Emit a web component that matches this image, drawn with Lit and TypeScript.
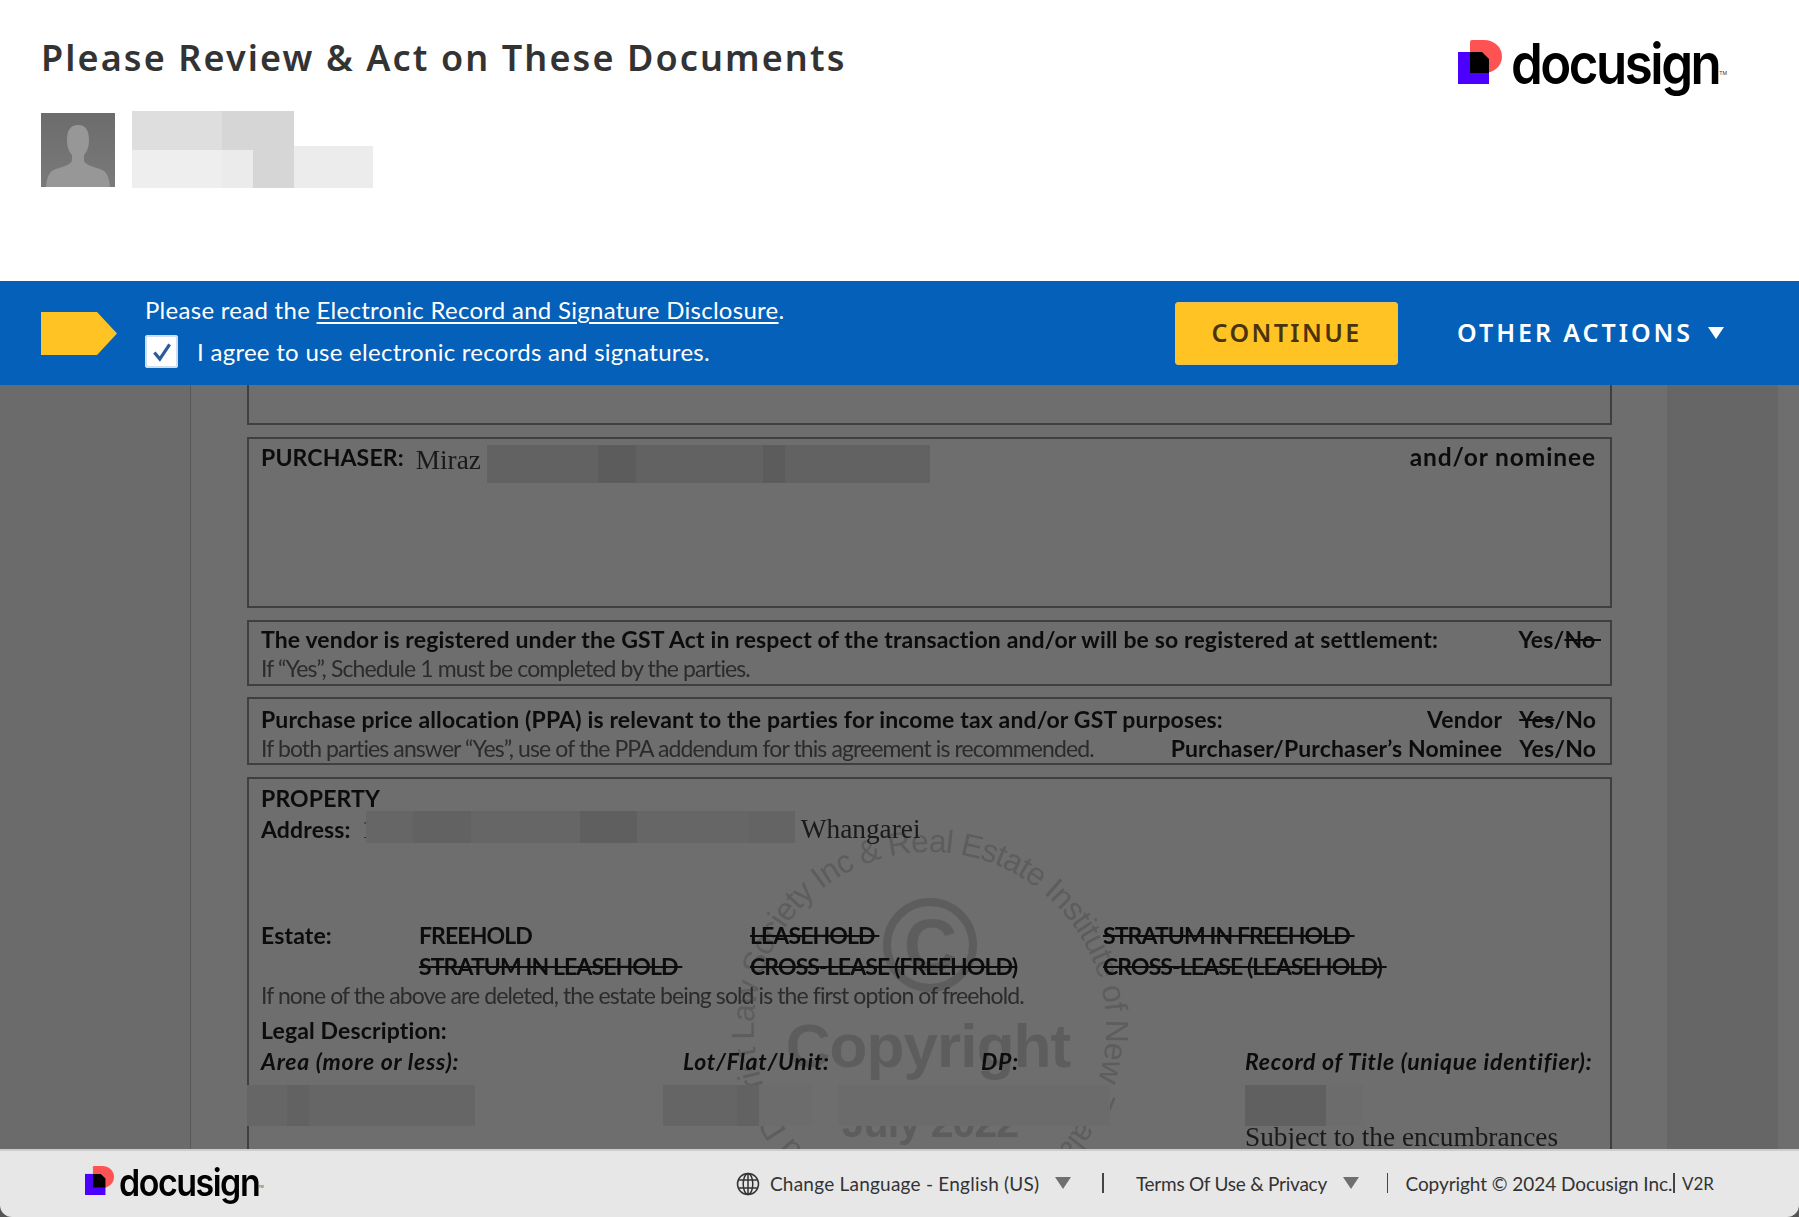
import { LitElement, html, css, svg } from "lit";
import { customElement } from "lit/decorators.js";

const mark = svg`<rect x="0" y="12" width="31" height="32" fill="#4c00ff"/>
<path d="M12 2Q12 0 14 0H26C36 0 44 7 44 16.5C44 26 36 33 26 33H12Z" fill="#ff5252"/>
<path d="M12 12H24L31 19V33H12Z" fill="#000"/>`;

type Block = [number, number, number, number, string];
const redactions: Block[] = [
  [487, 445, 443, 38, "#626262"],
  [598, 445, 38, 38, "#5c5c5c"],
  [763, 445, 22, 38, "#5c5c5c"],
  [366, 811, 429, 32, "#666666"],
  [413, 811, 58, 32, "#626262"],
  [580, 811, 57, 32, "#5f5f5f"],
  [749, 811, 46, 32, "#646464"],
  [247, 1085, 228, 41, "#666666"],
  [287, 1085, 22, 41, "#626262"],
  [663, 1085, 96, 41, "#656565"],
  [737, 1085, 22, 41, "#626262"],
  [759, 1085, 53, 41, "#6c6c6c"],
  [838, 1085, 272, 41, "#6b6b6b"],
  [1245, 1085, 81, 41, "#606060"],
  [1326, 1085, 37, 41, "#6c6c6c"],
];
const nameBlocks: Block[] = [
  [0, 0, 162, 39, "#dedede"],
  [90, 0, 72, 77, "#d6d6d6"],
  [0, 39, 121, 38, "#eeeeee"],
  [90, 39, 31, 38, "#ebebeb"],
  [162, 35, 79, 42, "#ececec"],
];

@customElement("app-root")
export class AppRoot extends LitElement {
  static styles = css`
    :host { display: flex; flex-direction: column; height: 100vh; min-height: 1217px; overflow: hidden; background: #555; font-family: "Lato", "Noto Sans", sans-serif; }
    .header { height: 281px; flex: none; background: #fff; display: flex; justify-content: space-between; padding: 0 72px 0 41px; box-sizing: border-box; }
    h1 { margin: 37px 0 0; font: 600 36px/42px "Noto Sans", sans-serif; letter-spacing: 2.1px; color: #333; white-space: nowrap; }
    .who { display: flex; gap: 17px; margin-top: 32px; align-items: flex-start; }
    .avatar { width: 74px; height: 74px; margin-top: 2px; display: block; }
    .name { position: relative; width: 241px; height: 77px; }
    .block { position: absolute; }
    .logo { display: flex; align-items: flex-start; align-self: flex-start; margin-top: 40px; }
    .logo svg { width: 44px; height: 44px; flex: none; }
    .logo-word { font: 600 51px/44px "Inter", sans-serif; letter-spacing: -2.5px; color: #000; margin-left: 9px; transform: scaleY(1.1); transform-origin: 0 0; }
    .tm { font: 400 5px/5px "Inter", sans-serif; color: #333; align-self: flex-end; margin-bottom: 8px; margin-left: 0; }
    .banner { height: 104px; flex: none; background: #0460b8; display: flex; align-items: center; color: #fff; padding-left: 41px; box-sizing: border-box; }
    .arrow { width: 76px; height: 43px; flex: none; margin-right: 28px; }
    .msg { flex: 1; font-size: 24px; letter-spacing: .28px; margin-top: -5px; }
    .msg a { color: #fff; text-decoration: underline; text-underline-offset: 3px; }
    .msg-line { height: 33px; line-height: 33px; }
    .agree { display: flex; align-items: center; gap: 19px; margin-top: 9px; }
    .check { width: 33px; height: 33px; background: #fff; border-radius: 3px; box-shadow: inset 0 0 0 2px #cfdff0; display: flex; align-items: center; justify-content: center; }
    .check svg { width: 24px; height: 24px; }
    .btn { width: 223px; height: 63px; box-sizing: border-box; padding-bottom: 2px; background: #ffc423; border: 1px solid #e8c25a; border-radius: 3px; display: flex; align-items: center; justify-content: center; font: 600 25px "Noto Sans", sans-serif; letter-spacing: 2.4px; color: #4a3410; }
    .other { margin-left: 59px; margin-right: 75px; display: flex; align-items: center; gap: 15px; padding-bottom: 2px; font: 600 25px "Noto Sans", sans-serif; letter-spacing: 2.95px; white-space: nowrap; }
    .tri { width: 0; height: 0; margin-top: 2px; border-left: 8px solid transparent; border-right: 8px solid transparent; border-top: 12px solid #fff; }
    .doc { flex: 1; min-height: 0; display: grid; grid-template-columns: 190px 1477px 111px 1fr; background: #6e6e6e; overflow: hidden; }
    .gutter { background: #6b6b6b; }
    .right { background: #666; }
    .page { position: relative; box-sizing: border-box; border-left: 1px solid #585858; padding: 0 55px 0 56px; filter: blur(.45px); font: 400 23px/28px "Lato", sans-serif; letter-spacing: -.9px; color: #2b2b2b; white-space: nowrap; overflow: hidden; }
    .wm { position: absolute; left: 0; top: 0; width: 1477px; height: 764px; }
    .wm text { font-family: "Liberation Sans", sans-serif; fill: #5d5d5d; }
    .box { position: relative; border: 2px solid #3f3f3f; box-sizing: border-box; padding: 0 14px 0 12px; }
    .b1 { height: 40px; border-top: 0; margin-bottom: 12px; }
    .b2 { height: 171px; margin-bottom: 12px; padding-top: 4px; }
    .b3 { height: 66px; margin-bottom: 11px; padding-top: 3px; }
    .b4 { height: 68px; margin-bottom: 12px; padding-top: 6px; }
    .b5 { height: 500px; padding-top: 5px; }
    .row { height: 28px; display: flex; align-items: center; justify-content: space-between; }
    .b3 .row + .row { margin-top: 1px; }
    b { font-weight: 700; color: #0c0c0c; letter-spacing: .14px; }
    .wide { font-size: 24.5px; letter-spacing: .9px; }
    .caps { font-weight: 700; color: #0c0c0c; letter-spacing: -.9px; }
    .serif { font-family: "Liberation Serif", serif; font-size: 27.3px; letter-spacing: 0; font-weight: 400; color: #1a1a1a; }
    .left { display: flex; align-items: center; gap: 12px; }
    .left .serif { margin-top: 6px; }
    s { text-decoration-thickness: 2px; color: #0c0c0c; }
    .r-yes { margin-right: -5px; }
    .pair { display: flex; gap: 17px; }
    .gap1 { margin-top: 1px; }
    .gap3 { margin-top: 3px; }
    .gap7 { margin-top: 7px; }
    .estate { margin-top: 78px; }
    .est-grid { display: grid; grid-template-columns: 158px 331px 353px 1fr; height: 28px; align-items: center; }
    .it-grid { display: grid; grid-template-columns: 422px 298px 264px 1fr; height: 28px; align-items: center; font-style: italic; font-weight: 700; color: #0c0c0c; letter-spacing: .75px; }
    .subject { margin-top: 48px; padding-left: 984px; height: 28px; line-height: 28px; }
    .addr { justify-content: flex-start; }
    .tick { margin-left: 11px; }
    .addr .place { margin-left: 425.5px; }
    .redact { position: absolute; }
    .footer { height: 68px; flex: none; box-sizing: border-box; background: #e7e7e7; border-top: 2px solid #cdcdcd; border-radius: 0 0 12px 12px; display: flex; align-items: center; padding: 0 85px; font-size: 19px; color: #333; white-space: nowrap; }
    .f-logo { display: flex; align-items: flex-start; flex: none; margin-top: -8px; }
    .f-logo svg { width: 29px; height: 29px; flex: none; }
    .f-word { font: 600 34px/29px "Inter", sans-serif; letter-spacing: -1.5px; color: #000; margin-left: 5px; transform: scaleY(1.1); transform-origin: 0 0; }
    .f-tm { font: 400 3.5px/4px "Inter", sans-serif; color: #333; align-self: flex-end; margin-bottom: 6px; margin-left: -1px; }
    .f-items { margin-left: auto; display: flex; align-items: center; margin-top: -2px; }
    .globe { width: 24px; height: 24px; margin-right: 10px; margin-top: 2px; }
    .lang { letter-spacing: .23px; }
    .terms { letter-spacing: -.25px; }
    .copy { letter-spacing: -.06px; }
    .ftri { width: 0; height: 0; border-left: 8px solid transparent; border-right: 8px solid transparent; border-top: 12px solid #6f6f6f; margin-left: 16px; }
    .sep { width: 1.5px; height: 20px; background: #444; }
    .s1 { margin: 0 32px 0 31px; }
    .s2 { margin: 0 17px 0 28px; }
    .s3 { margin: 0 7px 0 1px; }
    .v { font-size: 17px; }
  `;

  private blocks(list: Block[], ox: number, oy: number, cls: string) {
    return list.map(([x, y, w, h, c]) => html`<div class=${cls} style="left:${x - ox}px;top:${y - oy}px;width:${w}px;height:${h}px;background:${c}"></div>`);
  }

  render() {
    return html`
      <div class="header">
        <div>
          <h1>Please Review &amp; Act on These Documents</h1>
          <div class="who">
            <svg class="avatar" viewBox="0 0 74 74">
              <defs><linearGradient id="av" x1="0" y1="0" x2="0" y2="1"><stop offset="0" stop-color="#6c6c6c"/><stop offset="1" stop-color="#7a7a7a"/></linearGradient></defs>
              <rect width="74" height="74" fill="url(#av)"/>
              <path d="M37 12C29 12 26 18 26 27C26 34 28 39 31 42V47C31 51 24 53 15 56C8 58 6 64 5 74H69C68 64 66 58 59 56C50 53 43 51 43 47V42C46 39 48 34 48 27C48 18 45 12 37 12Z" fill="#979797"/>
            </svg>
            <div class="name">${this.blocks(nameBlocks, 0, 0, "block")}</div>
          </div>
        </div>
        <div class="logo">
          <svg viewBox="0 0 44 44">${mark}</svg>
          <span class="logo-word">docusign</span><span class="tm">TM</span>
        </div>
      </div>

      <div class="banner">
        <svg class="arrow" viewBox="0 0 76 43"><path d="M0 0H56L76 21.5L56 43H0Z" fill="#ffc423"/></svg>
        <div class="msg">
          <div class="msg-line">Please read the <a href="#">Electronic Record and Signature Disclosure</a>.</div>
          <div class="agree">
            <div class="check"><svg viewBox="0 0 22 22"><path d="M4 11.5L9 17.5L18 4" fill="none" stroke="#2b5c9e" stroke-width="3"/></svg></div>
            <span>I agree to use electronic records and signatures.</span>
          </div>
        </div>
        <div class="btn">CONTINUE</div>
        <div class="other">OTHER ACTIONS <span class="tri"></span></div>
      </div>

      <div class="doc">
        <div class="gutter"></div>
        <div class="page">
          <svg class="wm" viewBox="0 0 1477 764">
            <defs><path id="ring" d="M739 819a176 176 0 1 1 0 -352a176 176 0 1 1 0 352"/></defs>
            <text font-size="32" transform="rotate(11 739 643)"><textPath href="#ring">Auckland District Law Society Inc &amp; Real Estate Institute of New Zealand</textPath></text>
            <circle cx="739" cy="560" r="43" fill="none" stroke="#5d5d5d" stroke-width="8"/>
            <text x="739" y="586" font-size="74" font-weight="700" text-anchor="middle">C</text>
            <text x="737" y="682" font-size="62" font-weight="700" text-anchor="middle">Copyright</text>
            <text x="739" y="752" font-size="41" font-weight="700" text-anchor="middle">July 2022</text>
          </svg>

          <div class="box b1"></div>
          <div class="box b2">
            <div class="row">
              <div class="left"><b>PURCHASER:</b><span class="serif">Miraz</span></div>
              <b class="wide">and/or nominee</b>
            </div>
          </div>
          <div class="box b3">
            <div class="row"><b>The vendor is registered under the GST Act in respect of the transaction and/or will be so registered at settlement:</b><b class="r-yes">Yes/<s>No&nbsp;</s></b></div>
            <div class="row">If “Yes”, Schedule 1 must be completed by the parties.</div>
          </div>
          <div class="box b4">
            <div class="row"><b>Purchase price allocation (PPA) is relevant to the parties for income tax and/or GST purposes:</b><b class="pair"><span>Vendor</span><span><s>Yes</s>/No</span></b></div>
            <div class="row gap1"><span>If both parties answer “Yes”, use of the PPA addendum for this agreement is recommended.</span><b class="pair"><span>Purchaser/Purchaser’s Nominee</span><span>Yes/No</span></b></div>
          </div>
          <div class="box b5">
            <div class="row"><b>PROPERTY</b></div>
            <div class="row gap3 addr"><b>Address:</b><span class="serif tick">1</span><span class="serif place">Whangarei</span></div>
            <div class="est-grid estate caps"><b>Estate:</b><span>FREEHOLD</span><s>LEASEHOLD&nbsp;</s><s>STRATUM IN FREEHOLD&nbsp;</s></div>
            <div class="est-grid gap3 caps"><span></span><s>STRATUM IN LEASEHOLD&nbsp;</s><s>CROSS-LEASE (FREEHOLD)</s><s>CROSS-LEASE (LEASEHOLD)&nbsp;</s></div>
            <div class="row gap1">If none of the above are deleted, the estate being sold is the first option of freehold.</div>
            <div class="row gap7"><b>Legal Description:</b></div>
            <div class="it-grid gap3"><span>Area (more or less):</span><span>Lot/Flat/Unit:</span><span>DP:</span><span>Record of Title (unique identifier):</span></div>
            <div class="subject serif">Subject to the encumbrances</div>
          </div>
          ${this.blocks(redactions, 191, 385, "redact")}
        </div>
        <div class="right"></div>
        <div></div>
      </div>

      <div class="footer">
        <div class="f-logo">
          <svg viewBox="0 0 44 44">${mark}</svg>
          <span class="f-word">docusign</span><span class="f-tm">TM</span>
        </div>
        <div class="f-items">
          <svg class="globe" viewBox="0 0 24 24" fill="none" stroke="#333" stroke-width="1.5">
            <circle cx="12" cy="12" r="10.5"/><ellipse cx="12" cy="12" rx="4.8" ry="10.5"/><path d="M2.6 8H21.4M2.6 16H21.4M12 1.5V22.5"/>
          </svg>
          <span class="lang">Change Language - English (US)</span><span class="ftri"></span>
          <span class="sep s1"></span>
          <span class="terms">Terms Of Use &amp; Privacy</span><span class="ftri"></span>
          <span class="sep s2"></span>
          <span class="copy">Copyright © 2024 Docusign Inc.</span>
          <span class="sep s3"></span>
          <span class="v">V2R</span>
        </div>
      </div>
    `;
  }
}
